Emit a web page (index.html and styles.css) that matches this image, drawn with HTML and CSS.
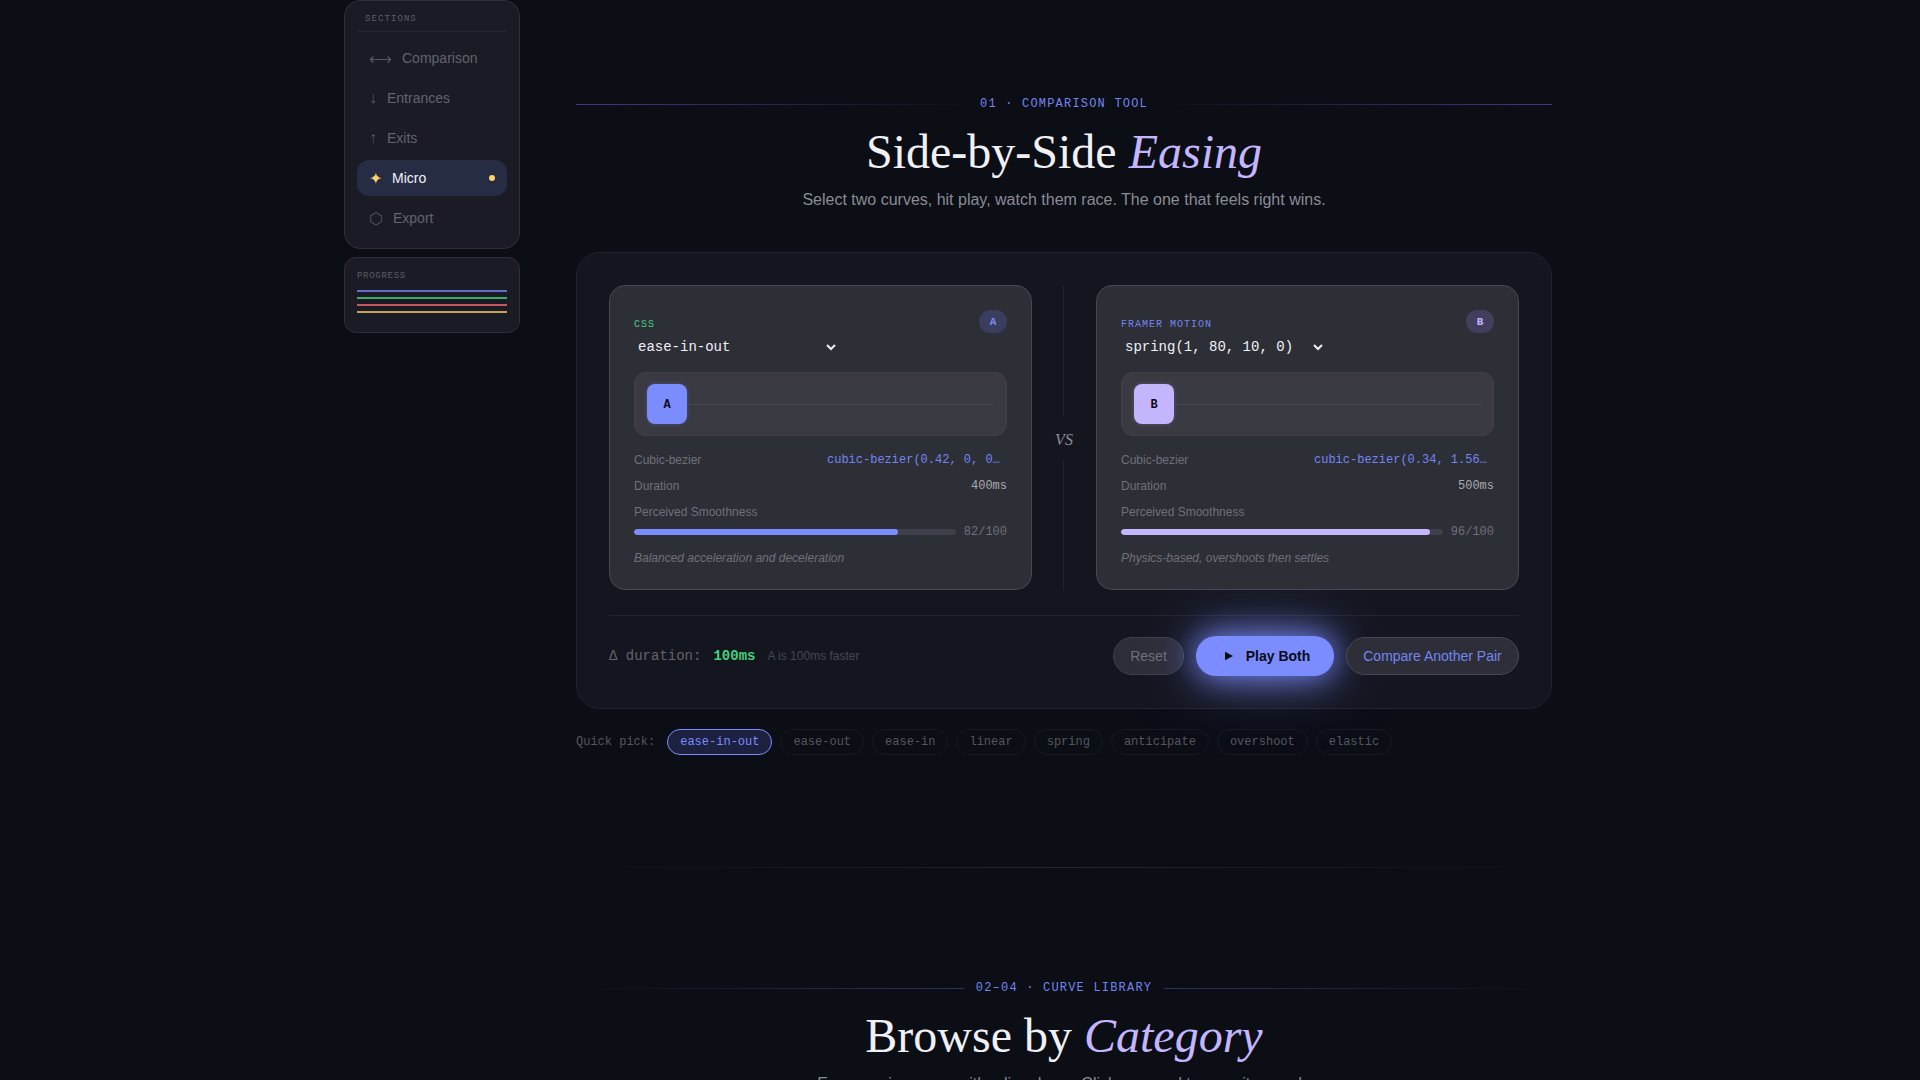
FILE: index.html
```html
<!DOCTYPE html>
<html lang="en">
<head>
  <meta charset="UTF-8" />
  <title>Easing Lab</title>
  <link rel="stylesheet" href="styles.css">
</head>
<body>
  <div class="page">
    <aside class="sidebar">
      <div class="nav-card">
        <div class="nav-title">SECTIONS</div>
        <a class="nav-item"><span class="nav-icon">⟷</span>Comparison</a>
        <a class="nav-item"><span class="nav-icon">↓</span>Entrances</a>
        <a class="nav-item"><span class="nav-icon">↑</span>Exits</a>
        <a class="nav-item active"><span class="nav-icon">✦</span>Micro<span class="nav-dot"></span></a>
        <a class="nav-item"><span class="nav-icon">⬡</span>Export</a>
      </div>
      <div class="progress-card">
        <div class="progress-title">PROGRESS</div>
        <div class="progress-line blue"></div>
        <div class="progress-line green"></div>
        <div class="progress-line red"></div>
        <div class="progress-line yellow"></div>
      </div>
    </aside>

    <main class="content">
      <section class="tool">
        <div class="eyebrow eyebrow-first"><span>01 · COMPARISON TOOL</span></div>
        <h2 class="heading">Side-by-Side <em>Easing</em></h2>
        <p class="subheading">Select two curves, hit play, watch them race. The one that feels right wins.</p>

        <div class="panel">
          <div class="compare">
            <div class="curve-card">
              <span class="corner-badge">A</span>
              <div class="lib-label green-text">CSS</div>
              <select class="curve-select"><option>ease-in-out</option></select>
              <div class="track">
                <div class="track-line"></div>
                <div class="ball ball-a">A</div>
              </div>
              <div class="row"><span class="row-label">Cubic-bezier</span><span class="row-code">cubic-bezier(0.42, 0, 0.58, 1)</span></div>
              <div class="row"><span class="row-label">Duration</span><span class="row-value">400ms</span></div>
              <div class="row-label smooth-label">Perceived Smoothness</div>
              <div class="smooth">
                <div class="bar"><div class="bar-fill fill-a" style="width: 82%"></div></div>
                <span class="score">82/100</span>
              </div>
              <p class="note">Balanced acceleration and deceleration</p>
            </div>

            <div class="versus">
              <div class="versus-line"></div>
              <span class="versus-text">VS</span>
              <div class="versus-line"></div>
            </div>

            <div class="curve-card">
              <span class="corner-badge badge-b">B</span>
              <div class="lib-label blue-text">FRAMER MOTION</div>
              <select class="curve-select"><option>spring(1, 80, 10, 0)</option></select>
              <div class="track">
                <div class="track-line"></div>
                <div class="ball ball-b">B</div>
              </div>
              <div class="row"><span class="row-label">Cubic-bezier</span><span class="row-code">cubic-bezier(0.34, 1.56, 0.64, 1)</span></div>
              <div class="row"><span class="row-label">Duration</span><span class="row-value">500ms</span></div>
              <div class="row-label smooth-label">Perceived Smoothness</div>
              <div class="smooth">
                <div class="bar"><div class="bar-fill fill-b" style="width: 96%"></div></div>
                <span class="score">96/100</span>
              </div>
              <p class="note">Physics-based, overshoots then settles</p>
            </div>
          </div>

          <div class="controls">
            <div class="delta">
              <span class="delta-label">Δ duration:</span>
              <span class="delta-value">100ms</span>
              <span class="delta-note">A is 100ms faster</span>
            </div>
            <div class="actions">
              <button class="btn btn-reset">Reset</button>
              <button class="btn btn-play">
                <svg class="play-icon" viewBox="0 0 14 14"><path d="M5 2.8 L13 7 L5 11.2 Z"/></svg>
                Play Both
              </button>
              <button class="btn btn-other">Compare Another Pair</button>
            </div>
          </div>
        </div>

        <div class="quick">
          <span class="quick-label">Quick pick:</span>
          <button class="chip selected">ease-in-out</button>
          <button class="chip">ease-out</button>
          <button class="chip">ease-in</button>
          <button class="chip">linear</button>
          <button class="chip">spring</button>
          <button class="chip">anticipate</button>
          <button class="chip">overshoot</button>
          <button class="chip">elastic</button>
        </div>
      </section>

      <div class="divider"></div>

      <section class="library">
        <div class="eyebrow eyebrow-fade"><span>02–04 · CURVE LIBRARY</span></div>
        <h2 class="heading">Browse by <em>Category</em></h2>
        <p class="subheading">Every easing curve with a live demo. Click any card to copy it as code</p>
      </section>
    </main>
  </div>
</body>
</html>
```

FILE: styles.css
```css
* {
  box-sizing: border-box;
  margin: 0;
  padding: 0;
}

html, body {
  height: 1080px;
  overflow: hidden;
}

body {
  font-family: "Liberation Sans", Arial, sans-serif;
  background: #0b0e15;
  color: #f0f0f5;
}

.page {
  display: flex;
  align-items: flex-start;
  padding-left: 344px;
}

/* Sidebar */
.sidebar {
  width: 176px;
  flex-shrink: 0;
  display: flex;
  flex-direction: column;
  gap: 8px;
}

.nav-card {
  height: 249px;
  padding: 8px 12px;
  background: #1a1b25;
  border: 1px solid #2e2f39;
  border-radius: 16px;
}

.nav-title {
  font-family: "Liberation Mono", monospace;
  font-size: 9px;
  line-height: 14px;
  letter-spacing: 1.08px;
  color: #5c5d66;
  padding: 3px 8px 5px;
  margin-bottom: 8px;
  border-bottom: 1px solid #25262f;
}

.nav-item {
  display: flex;
  align-items: center;
  height: 36px;
  margin-bottom: 4px;
  padding: 0 12px;
  border-radius: 12px;
  font-size: 14px;
  color: #62636b;
}

.nav-item.active {
  background: #272c45;
  color: #f0f0f5;
}

.nav-icon {
  margin-right: 10px;
  font-size: 16px;
  color: #55565e;
}

.active .nav-icon {
  color: #ffd166;
}

.nav-dot {
  width: 6px;
  height: 6px;
  margin-left: auto;
  border-radius: 50%;
  background: #ffd166;
}

.progress-card {
  height: 76px;
  padding: 12px;
  background: #1a1b25;
  border: 1px solid #2e2f39;
  border-radius: 12px;
}

.progress-title {
  font-family: "Liberation Mono", monospace;
  font-size: 9px;
  line-height: 12px;
  letter-spacing: 0.72px;
  color: #5c5d66;
  margin-bottom: 8px;
}

.progress-line {
  height: 2px;
  margin-bottom: 5px;
  opacity: 0.75;
}

.progress-line.blue { background: #7b8cff; }
.progress-line.green { background: #4ade80; }
.progress-line.red { background: #ff6b6b; }
.progress-line.yellow { background: #ffd166; }

/* Main column */
.content {
  width: 976px;
  margin-left: 56px;
}

.tool {
  padding-top: 96px;
}

.eyebrow {
  display: flex;
  align-items: center;
  gap: 12px;
  font-family: "Liberation Mono", monospace;
  font-size: 12px;
  line-height: 16px;
  letter-spacing: 1.2px;
  color: #7485f0;
  margin-bottom: 11px;
}

.eyebrow span {
  white-space: nowrap;
}

.eyebrow::before,
.eyebrow::after {
  content: "";
  flex: 1;
  height: 1px;
}

.eyebrow-first::before {
  background: linear-gradient(90deg, rgba(105, 105, 255, 0.5), rgba(105, 105, 255, 0));
}

.eyebrow-first::after {
  background: linear-gradient(270deg, rgba(105, 105, 255, 0.5), rgba(105, 105, 255, 0));
}

.eyebrow-fade::before {
  background: linear-gradient(270deg, rgba(123, 140, 255, 0.3), rgba(123, 140, 255, 0));
}

.eyebrow-fade::after {
  background: linear-gradient(90deg, rgba(123, 140, 255, 0.3), rgba(123, 140, 255, 0));
}

.heading {
  font-family: "Liberation Serif", serif;
  font-size: 48px;
  font-weight: 400;
  line-height: 58px;
  text-align: center;
  color: #f0f0f5;
  margin-bottom: 7px;
}

.heading em {
  color: #c4b5fd;
}

.subheading {
  font-size: 16px;
  line-height: 24px;
  text-align: center;
  color: #8a8b94;
}

.panel {
  margin-top: 40px;
  height: 457px;
  padding: 32px;
  background: #14161f;
  border: 1px solid #22242d;
  border-radius: 24px;
}

.compare {
  display: grid;
  grid-template-columns: 1fr 64px 1fr;
  height: 305px;
}

.curve-card {
  position: relative;
  padding: 24px 24px 22px;
  background: #2d2f37;
  border: 1px solid #474851;
  border-radius: 16px;
}

.corner-badge {
  position: absolute;
  top: 24px;
  right: 24px;
  width: 28px;
  height: 23px;
  border-radius: 12px;
  background: #3a3d5e;
  color: #7b8cff;
  font-family: "Liberation Mono", monospace;
  font-size: 11px;
  font-weight: 700;
  line-height: 24px;
  text-align: center;
}

.badge-b {
  background: #423f5e;
  color: #c4b5fd;
}

.lib-label {
  font-family: "Liberation Mono", monospace;
  font-size: 10px;
  line-height: 14px;
  letter-spacing: 1px;
  margin-top: 8px;
}

.green-text { color: #46cf7c; }
.blue-text { color: #7485f0; }

.curve-select {
  display: block;
  width: 205px;
  height: 20px;
  margin-top: 5px;
  background: transparent;
  border: none;
  outline: none;
  color: #f0f0f5;
  font-family: "Liberation Mono", monospace;
  font-size: 14px;
}

.track {
  position: relative;
  display: flex;
  align-items: center;
  height: 64px;
  margin-top: 15px;
  margin-bottom: 15px;
  padding-left: 12px;
  background: #3a3a43;
  border: 1px solid #3f404a;
  border-radius: 12px;
}

.track-line {
  position: absolute;
  left: 12px;
  right: 12px;
  top: 50%;
  height: 1px;
  background: #45464f;
}

.ball {
  position: relative;
  width: 40px;
  height: 40px;
  padding-top: 1px;
  border-radius: 8px;
  display: flex;
  align-items: center;
  justify-content: center;
  font-family: "Liberation Mono", monospace;
  font-size: 12px;
  font-weight: 700;
  color: #0a0c14;
}

.ball-a {
  background: #7b8cff;
  box-shadow: 0 0 4px rgba(123, 140, 255, 0.25);
}

.ball-b {
  background: #c4b5fd;
  box-shadow: 0 0 4px rgba(196, 181, 253, 0.25);
}

.row {
  display: flex;
  justify-content: space-between;
  align-items: center;
  gap: 12px;
  height: 18px;
  margin-bottom: 8px;
}

.row-label {
  font-size: 12px;
  line-height: 18px;
  color: #6f7079;
  white-space: nowrap;
}

.row-code {
  max-width: 174px;
  margin-right: 6px;
  overflow: hidden;
  text-overflow: ellipsis;
  white-space: nowrap;
  font-family: "Liberation Mono", monospace;
  font-size: 12px;
  color: #7485f0;
}

.row-value {
  font-family: "Liberation Mono", monospace;
  font-size: 12px;
  color: #a8a9b0;
}

.smooth-label {
  display: block;
}

.smooth {
  display: flex;
  align-items: center;
  gap: 8px;
  height: 18px;
  margin-top: 2px;
}

.bar {
  flex: 1;
  height: 6px;
  border-radius: 3px;
  background: #3f4049;
  overflow: hidden;
}

.bar-fill {
  height: 100%;
  border-radius: 3px;
}

.fill-a { background: #7b8cff; }
.fill-b { background: #c4b5fd; }

.score {
  font-family: "Liberation Mono", monospace;
  font-size: 12px;
  color: #6f7079;
}

.note {
  margin-top: 8px;
  font-size: 12px;
  font-style: italic;
  line-height: 18px;
  color: #6f7079;
}

.versus {
  display: flex;
  flex-direction: column;
  align-items: center;
  gap: 12px;
}

.versus-line {
  flex: 1;
  width: 1px;
  margin-right: 1px;
  background: #22232c;
}

.versus-text {
  height: 20px;
  padding-top: 2px;
  font-family: "Liberation Serif", serif;
  font-size: 16px;
  font-style: italic;
  line-height: 20px;
  color: #8a8b94;
}

.controls {
  display: flex;
  align-items: center;
  justify-content: space-between;
  margin-top: 25px;
  padding-top: 20px;
  border-top: 1px solid #22242d;
}

.delta {
  display: flex;
  align-items: center;
}

.delta-label {
  font-family: "Liberation Mono", monospace;
  font-size: 14px;
  color: #62636b;
}

.delta-value {
  margin-left: 12px;
  font-family: "Liberation Mono", monospace;
  font-size: 14px;
  font-weight: 700;
  color: #46cf7c;
}

.delta-note {
  margin-left: 12px;
  font-size: 12px;
  color: #45464f;
}

.actions {
  display: flex;
  align-items: center;
  gap: 12px;
}

.btn {
  font-family: "Liberation Sans", Arial, sans-serif;
  font-size: 14px;
  border-radius: 20px;
}

.btn-reset {
  width: 71px;
  height: 38px;
  background: #2d2e38;
  border: 1px solid #3f4049;
  color: #6f7079;
}

.btn-play {
  display: flex;
  align-items: center;
  justify-content: center;
  gap: 12px;
  width: 138px;
  height: 40px;
  background: #7b8cff;
  border: none;
  color: #0a0c14;
  font-weight: 700;
  box-shadow: 0 0 32px rgb(123, 140, 255), 0 0 64px rgba(123, 140, 255, 0.5);
}

.play-icon {
  width: 14px;
  height: 14px;
  fill: #0a0c14;
}

.btn-other {
  width: 173px;
  height: 38px;
  background: #2d2e38;
  border: 1px solid #474851;
  color: #7485f0;
}

.quick {
  display: flex;
  align-items: center;
  gap: 8px;
  margin-top: 20px;
  height: 26px;
}

.quick-label {
  font-family: "Liberation Mono", monospace;
  font-size: 12px;
  color: #55565e;
  margin-right: 4px;
}

.chip {
  height: 26px;
  padding: 0 12px;
  border: 1px solid #181a23;
  border-radius: 13px;
  background: transparent;
  font-family: "Liberation Mono", monospace;
  font-size: 12px;
  color: #55565e;
}

.chip.selected {
  background: #1d2140;
  border-color: #7b8cff;
  color: #7b8cff;
}

.divider {
  height: 1px;
  margin-top: 112px;
  background: linear-gradient(90deg, rgba(255, 255, 255, 0), rgba(255, 255, 255, 0.1), rgba(255, 255, 255, 0));
}

.library {
  padding-top: 112px;
}
```
